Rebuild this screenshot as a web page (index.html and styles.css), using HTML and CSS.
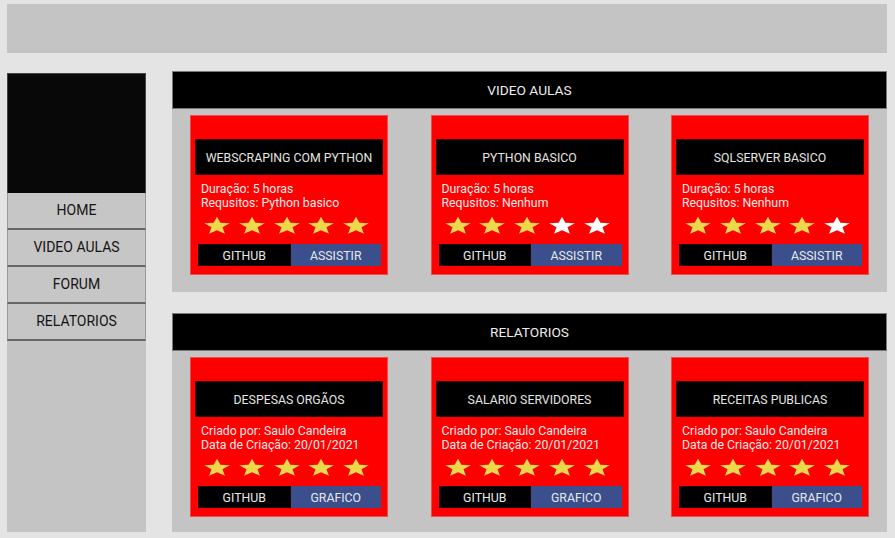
FILE: index.html
```html
<!DOCTYPE html>
<html lang="pt-BR">
<head>
<meta charset="utf-8">
<title>Dashboard</title>
<link rel="stylesheet" href="styles.css">
</head>
<body>
<div class="page">
  <header class="topbar"></header>
  <div class="layout">
    <aside class="sidebar">
      <div class="logo"></div>
      <nav class="menu">
        <a class="menu-item">HOME</a>
        <a class="menu-item">VIDEO AULAS</a>
        <a class="menu-item">FORUM</a>
        <a class="menu-item">RELATORIOS</a>
      </nav>
    </aside>
    <main class="content">
      <section class="section">
        <h2 class="section-title">VIDEO AULAS</h2>
        <div class="cards">
          <div class="card">
            <div class="card-title">WEBSCRAPING COM PYTHON</div>
            <div class="card-info">Duração: 5 horas<br>Requsitos: Python basico</div>
            <div class="stars">
              <svg class="star on" viewBox="0 0 24 24" preserveAspectRatio="none"><polygon points="12,1 14.9,8.6 23,9.1 16.7,14.3 18.8,22.5 12,17.9 5.2,22.5 7.3,14.3 1,9.1 9.1,8.6"/></svg>
              <svg class="star on" viewBox="0 0 24 24" preserveAspectRatio="none"><polygon points="12,1 14.9,8.6 23,9.1 16.7,14.3 18.8,22.5 12,17.9 5.2,22.5 7.3,14.3 1,9.1 9.1,8.6"/></svg>
              <svg class="star on" viewBox="0 0 24 24" preserveAspectRatio="none"><polygon points="12,1 14.9,8.6 23,9.1 16.7,14.3 18.8,22.5 12,17.9 5.2,22.5 7.3,14.3 1,9.1 9.1,8.6"/></svg>
              <svg class="star on" viewBox="0 0 24 24" preserveAspectRatio="none"><polygon points="12,1 14.9,8.6 23,9.1 16.7,14.3 18.8,22.5 12,17.9 5.2,22.5 7.3,14.3 1,9.1 9.1,8.6"/></svg>
              <svg class="star on" viewBox="0 0 24 24" preserveAspectRatio="none"><polygon points="12,1 14.9,8.6 23,9.1 16.7,14.3 18.8,22.5 12,17.9 5.2,22.5 7.3,14.3 1,9.1 9.1,8.6"/></svg>
            </div>
            <div class="buttons"><a class="btn btn-dark">GITHUB</a><a class="btn btn-blue">ASSISTIR</a></div>
          </div>
          <div class="card">
            <div class="card-title">PYTHON BASICO</div>
            <div class="card-info">Duração: 5 horas<br>Requsitos: Nenhum</div>
            <div class="stars">
              <svg class="star on" viewBox="0 0 24 24" preserveAspectRatio="none"><polygon points="12,1 14.9,8.6 23,9.1 16.7,14.3 18.8,22.5 12,17.9 5.2,22.5 7.3,14.3 1,9.1 9.1,8.6"/></svg>
              <svg class="star on" viewBox="0 0 24 24" preserveAspectRatio="none"><polygon points="12,1 14.9,8.6 23,9.1 16.7,14.3 18.8,22.5 12,17.9 5.2,22.5 7.3,14.3 1,9.1 9.1,8.6"/></svg>
              <svg class="star on" viewBox="0 0 24 24" preserveAspectRatio="none"><polygon points="12,1 14.9,8.6 23,9.1 16.7,14.3 18.8,22.5 12,17.9 5.2,22.5 7.3,14.3 1,9.1 9.1,8.6"/></svg>
              <svg class="star off" viewBox="0 0 24 24" preserveAspectRatio="none"><polygon points="12,1 14.9,8.6 23,9.1 16.7,14.3 18.8,22.5 12,17.9 5.2,22.5 7.3,14.3 1,9.1 9.1,8.6"/></svg>
              <svg class="star off" viewBox="0 0 24 24" preserveAspectRatio="none"><polygon points="12,1 14.9,8.6 23,9.1 16.7,14.3 18.8,22.5 12,17.9 5.2,22.5 7.3,14.3 1,9.1 9.1,8.6"/></svg>
            </div>
            <div class="buttons"><a class="btn btn-dark">GITHUB</a><a class="btn btn-blue">ASSISTIR</a></div>
          </div>
          <div class="card">
            <div class="card-title">SQLSERVER BASICO</div>
            <div class="card-info">Duração: 5 horas<br>Requsitos: Nenhum</div>
            <div class="stars">
              <svg class="star on" viewBox="0 0 24 24" preserveAspectRatio="none"><polygon points="12,1 14.9,8.6 23,9.1 16.7,14.3 18.8,22.5 12,17.9 5.2,22.5 7.3,14.3 1,9.1 9.1,8.6"/></svg>
              <svg class="star on" viewBox="0 0 24 24" preserveAspectRatio="none"><polygon points="12,1 14.9,8.6 23,9.1 16.7,14.3 18.8,22.5 12,17.9 5.2,22.5 7.3,14.3 1,9.1 9.1,8.6"/></svg>
              <svg class="star on" viewBox="0 0 24 24" preserveAspectRatio="none"><polygon points="12,1 14.9,8.6 23,9.1 16.7,14.3 18.8,22.5 12,17.9 5.2,22.5 7.3,14.3 1,9.1 9.1,8.6"/></svg>
              <svg class="star on" viewBox="0 0 24 24" preserveAspectRatio="none"><polygon points="12,1 14.9,8.6 23,9.1 16.7,14.3 18.8,22.5 12,17.9 5.2,22.5 7.3,14.3 1,9.1 9.1,8.6"/></svg>
              <svg class="star off" viewBox="0 0 24 24" preserveAspectRatio="none"><polygon points="12,1 14.9,8.6 23,9.1 16.7,14.3 18.8,22.5 12,17.9 5.2,22.5 7.3,14.3 1,9.1 9.1,8.6"/></svg>
            </div>
            <div class="buttons"><a class="btn btn-dark">GITHUB</a><a class="btn btn-blue">ASSISTIR</a></div>
          </div>
        </div>
      </section>
      <section class="section section-reports">
        <h2 class="section-title">RELATORIOS</h2>
        <div class="cards">
          <div class="card">
            <div class="card-title">DESPESAS ORGÃOS</div>
            <div class="card-info">Criado por: Saulo Candeira<br>Data de Criação: 20/01/2021</div>
            <div class="stars">
              <svg class="star on" viewBox="0 0 24 24" preserveAspectRatio="none"><polygon points="12,1 14.9,8.6 23,9.1 16.7,14.3 18.8,22.5 12,17.9 5.2,22.5 7.3,14.3 1,9.1 9.1,8.6"/></svg>
              <svg class="star on" viewBox="0 0 24 24" preserveAspectRatio="none"><polygon points="12,1 14.9,8.6 23,9.1 16.7,14.3 18.8,22.5 12,17.9 5.2,22.5 7.3,14.3 1,9.1 9.1,8.6"/></svg>
              <svg class="star on" viewBox="0 0 24 24" preserveAspectRatio="none"><polygon points="12,1 14.9,8.6 23,9.1 16.7,14.3 18.8,22.5 12,17.9 5.2,22.5 7.3,14.3 1,9.1 9.1,8.6"/></svg>
              <svg class="star on" viewBox="0 0 24 24" preserveAspectRatio="none"><polygon points="12,1 14.9,8.6 23,9.1 16.7,14.3 18.8,22.5 12,17.9 5.2,22.5 7.3,14.3 1,9.1 9.1,8.6"/></svg>
              <svg class="star on" viewBox="0 0 24 24" preserveAspectRatio="none"><polygon points="12,1 14.9,8.6 23,9.1 16.7,14.3 18.8,22.5 12,17.9 5.2,22.5 7.3,14.3 1,9.1 9.1,8.6"/></svg>
            </div>
            <div class="buttons"><a class="btn btn-dark">GITHUB</a><a class="btn btn-blue">GRAFICO</a></div>
          </div>
          <div class="card">
            <div class="card-title">SALARIO SERVIDORES</div>
            <div class="card-info">Criado por: Saulo Candeira<br>Data de Criação: 20/01/2021</div>
            <div class="stars">
              <svg class="star on" viewBox="0 0 24 24" preserveAspectRatio="none"><polygon points="12,1 14.9,8.6 23,9.1 16.7,14.3 18.8,22.5 12,17.9 5.2,22.5 7.3,14.3 1,9.1 9.1,8.6"/></svg>
              <svg class="star on" viewBox="0 0 24 24" preserveAspectRatio="none"><polygon points="12,1 14.9,8.6 23,9.1 16.7,14.3 18.8,22.5 12,17.9 5.2,22.5 7.3,14.3 1,9.1 9.1,8.6"/></svg>
              <svg class="star on" viewBox="0 0 24 24" preserveAspectRatio="none"><polygon points="12,1 14.9,8.6 23,9.1 16.7,14.3 18.8,22.5 12,17.9 5.2,22.5 7.3,14.3 1,9.1 9.1,8.6"/></svg>
              <svg class="star on" viewBox="0 0 24 24" preserveAspectRatio="none"><polygon points="12,1 14.9,8.6 23,9.1 16.7,14.3 18.8,22.5 12,17.9 5.2,22.5 7.3,14.3 1,9.1 9.1,8.6"/></svg>
              <svg class="star on" viewBox="0 0 24 24" preserveAspectRatio="none"><polygon points="12,1 14.9,8.6 23,9.1 16.7,14.3 18.8,22.5 12,17.9 5.2,22.5 7.3,14.3 1,9.1 9.1,8.6"/></svg>
            </div>
            <div class="buttons"><a class="btn btn-dark">GITHUB</a><a class="btn btn-blue">GRAFICO</a></div>
          </div>
          <div class="card">
            <div class="card-title">RECEITAS PUBLICAS</div>
            <div class="card-info">Criado por: Saulo Candeira<br>Data de Criação: 20/01/2021</div>
            <div class="stars">
              <svg class="star on" viewBox="0 0 24 24" preserveAspectRatio="none"><polygon points="12,1 14.9,8.6 23,9.1 16.7,14.3 18.8,22.5 12,17.9 5.2,22.5 7.3,14.3 1,9.1 9.1,8.6"/></svg>
              <svg class="star on" viewBox="0 0 24 24" preserveAspectRatio="none"><polygon points="12,1 14.9,8.6 23,9.1 16.7,14.3 18.8,22.5 12,17.9 5.2,22.5 7.3,14.3 1,9.1 9.1,8.6"/></svg>
              <svg class="star on" viewBox="0 0 24 24" preserveAspectRatio="none"><polygon points="12,1 14.9,8.6 23,9.1 16.7,14.3 18.8,22.5 12,17.9 5.2,22.5 7.3,14.3 1,9.1 9.1,8.6"/></svg>
              <svg class="star on" viewBox="0 0 24 24" preserveAspectRatio="none"><polygon points="12,1 14.9,8.6 23,9.1 16.7,14.3 18.8,22.5 12,17.9 5.2,22.5 7.3,14.3 1,9.1 9.1,8.6"/></svg>
              <svg class="star on" viewBox="0 0 24 24" preserveAspectRatio="none"><polygon points="12,1 14.9,8.6 23,9.1 16.7,14.3 18.8,22.5 12,17.9 5.2,22.5 7.3,14.3 1,9.1 9.1,8.6"/></svg>
            </div>
            <div class="buttons"><a class="btn btn-dark">GITHUB</a><a class="btn btn-blue">GRAFICO</a></div>
          </div>
        </div>
      </section>
    </main>
  </div>
</div>
</body>
</html>
```
FILE: styles.css
```css
* {
  box-sizing: border-box;
}

html, body {
  margin: 0;
  background: #e4e4e4;
  font-family: Roboto, "Liberation Sans", Arial, sans-serif;
}

.page {
  width: 895px;
  height: 538px;
  padding: 4px 0 0 7px;
  overflow: hidden;
}

.topbar {
  width: 880px;
  height: 49px;
  background: #c4c4c4;
}

.layout {
  display: flex;
  align-items: flex-start;
  margin-top: 18px;
}

.sidebar {
  width: 139px;
  height: 459px;
  margin-top: 2px;
  background: #c4c4c4;
  display: flex;
  flex-direction: column;
}

.logo {
  height: 120px;
  background: #080808;
  border: 1px solid #444;
  border-bottom: none;
}

.menu {
  display: flex;
  flex-direction: column;
}

.menu-item {
  height: 37px;
  display: flex;
  align-items: center;
  justify-content: center;
  padding-bottom: 1px;
  font-size: 14px;
  color: #141414;
  border: 1px solid #9a9a9a;
  border-top: none;
  border-bottom: 2px solid #666;
  background: #c6c6c6;
}

.content {
  width: 715px;
  margin-left: 26px;
}

.section-title {
  margin: 0;
  height: 38px;
  background: #000;
  border: 1px solid #7a7a7a;
  color: #ececec;
  font-size: 13.7px;
  font-weight: 400;
  display: flex;
  align-items: center;
  justify-content: center;
}

.cards {
  height: 183px;
  background: #c4c4c4;
  padding: 6px 18px 0;
  display: flex;
  justify-content: space-between;
  align-items: flex-start;
}

.section-reports {
  margin-top: 21px;
}

.section-reports .cards {
  height: 181px;
}

.card {
  width: 198px;
  height: 160px;
  background: #ff0000;
  border: 1px solid #f34a4a;
  padding: 23px 4px 0 4px;
}

.card-title {
  height: 36px;
  padding-top: 1px;
  background: #000;
  border: 1px solid #3a0000;
  color: #e4e4e4;
  font-size: 12.3px;
  display: flex;
  align-items: center;
  justify-content: center;
}

.card-info {
  margin: 7px 0 0 6px;
  font-size: 12.3px;
  line-height: 14px;
  color: #f6eaea;
}

.stars {
  width: 167px;
  margin: 6px 0 0 8px;
  display: flex;
  justify-content: space-between;
}

.star {
  width: 28px;
  height: 19px;
  display: block;
}

.star.on {
  fill: #ecd94b;
}

.star.off {
  fill: #ffffff;
}

.buttons {
  width: 183px;
  height: 22px;
  margin: 9px 0 0 3px;
  display: flex;
}

.btn {
  flex: 1;
  display: flex;
  align-items: center;
  justify-content: center;
  padding-top: 2px;
  font-size: 12.3px;
  color: #e8e8e8;
}

.btn-dark {
  background: #000;
  border: 1px solid #2a0000;
}

.btn-blue {
  background: #3a4f8b;
}
```
